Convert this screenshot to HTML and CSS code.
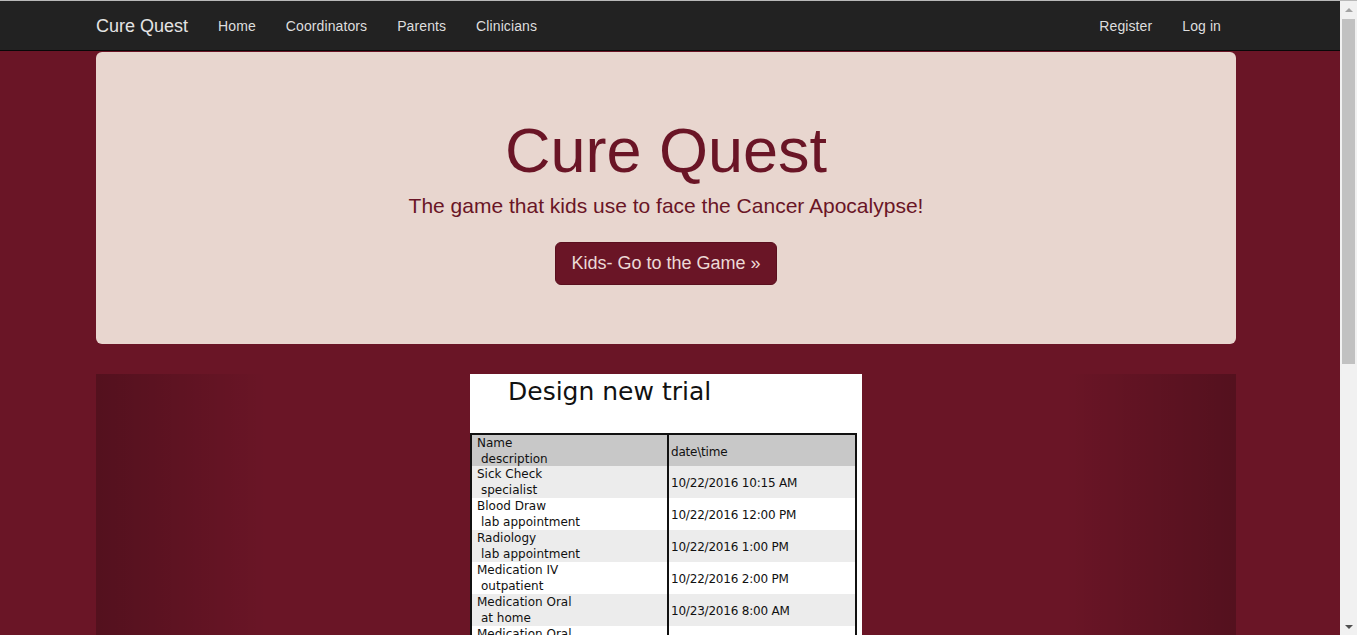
FILE: index.html
```html
<!DOCTYPE html>
<html lang="en">
<head>
<meta charset="utf-8">
<title>Cure Quest</title>
<link rel="stylesheet" href="styles.css">
</head>
<body>
<div class="viewport">
  <div class="page">
    <nav class="navbar">
      <div class="container nav-inner">
        <a class="brand" href="#">Cure Quest</a>
        <ul class="nav">
          <li><a href="#">Home</a></li>
          <li><a href="#">Coordinators</a></li>
          <li><a href="#">Parents</a></li>
          <li><a href="#">Clinicians</a></li>
        </ul>
        <ul class="nav nav-right">
          <li><a href="#">Register</a></li>
          <li><a href="#">Log in</a></li>
        </ul>
      </div>
    </nav>
    <main class="container">
      <section class="jumbotron">
        <h1>Cure Quest</h1>
        <p class="lead">The game that kids use to face the Cancer Apocalypse!</p>
        <a class="btn" href="#">Kids- Go to the Game &raquo;</a>
      </section>
      <section class="carousel">
        <div class="control control-left"></div>
        <div class="slide">
          <div class="mock-title">Design new trial</div>
          <div class="mock-table">
            <div class="row head">
              <div class="c1">Name<br><span class="sub">description</span></div>
              <div class="c2">date\time</div>
            </div>
            <div class="row alt">
              <div class="c1">Sick Check<br><span class="sub">specialist</span></div>
              <div class="c2">10/22/2016 10:15 AM</div>
            </div>
            <div class="row">
              <div class="c1">Blood Draw<br><span class="sub">lab appointment</span></div>
              <div class="c2">10/22/2016 12:00 PM</div>
            </div>
            <div class="row alt">
              <div class="c1">Radiology<br><span class="sub">lab appointment</span></div>
              <div class="c2">10/22/2016 1:00 PM</div>
            </div>
            <div class="row">
              <div class="c1">Medication IV<br><span class="sub">outpatient</span></div>
              <div class="c2">10/22/2016 2:00 PM</div>
            </div>
            <div class="row alt">
              <div class="c1">Medication Oral<br><span class="sub">at home</span></div>
              <div class="c2">10/23/2016 8:00 AM</div>
            </div>
            <div class="row">
              <div class="c1">Medication Oral<br><span class="sub">at home</span></div>
              <div class="c2">10/24/2016 8:00 AM</div>
            </div>
          </div>
        </div>
        <div class="control control-right"></div>
      </section>
    </main>
  </div>
  <div class="scrollbar">
    <div class="arrow up"></div>
    <div class="track"><div class="thumb"></div></div>
    <div class="arrow down"></div>
  </div>
</div>
</body>
</html>
```

FILE: styles.css
```css
html, body {
  margin: 0;
  padding: 0;
  height: 635px;
  overflow: hidden;
}
body {
  border-top: 1px solid #b9b9b9;
  box-sizing: border-box;
  font-family: "Liberation Sans", Arial, sans-serif;
  background: #6a1526;
}
.viewport {
  display: flex;
  height: 634px;
}
.page {
  flex: 1;
  min-width: 0;
  overflow: hidden;
}
.container {
  width: 1140px;
  margin-left: 96px;
}

/* navbar */
.navbar {
  background: #222;
  height: 50px;
  box-sizing: border-box;
  border-bottom: 1px solid #080808;
}
.nav-inner {
  display: flex;
  align-items: center;
  height: 49px;
}
.brand {
  font-size: 18px;
  line-height: 20px;
  color: #e4e4e4;
  text-decoration: none;
  padding-right: 15px;
}
.nav {
  display: flex;
  list-style: none;
  margin: 0;
  padding: 0;
}
.nav a {
  display: block;
  padding: 15px;
  font-size: 14px;
  line-height: 20px;
  letter-spacing: 0.1px;
  color: #dedede;
  text-decoration: none;
}
.nav-right {
  margin-left: auto;
}

/* jumbotron */
.jumbotron {
  margin-top: 1px;
  background: #e8d6cf;
  border-radius: 6px;
  padding: 64px 60px 59px;
  text-align: center;
  color: #6a1526;
  margin-bottom: 30px;
}
.jumbotron h1 {
  margin: 0 0 6px;
  font-size: 63px;
  font-weight: normal;
  line-height: 69px;
}
.lead {
  margin: 0 0 21px;
  font-size: 21px;
  line-height: 30px;
}
.btn {
  display: inline-block;
  box-sizing: border-box;
  height: 43px;
  padding: 0 15px;
  font-size: 18px;
  line-height: 41px;
  color: #ecd9d6;
  background: #6a1526;
  border: 1px solid #5a0f1e;
  border-radius: 6px;
  text-decoration: none;
}

/* carousel */
.carousel {
  display: flex;
  justify-content: space-between;
  height: 400px;
}
.control {
  width: 171px;
}
.control-left {
  background: linear-gradient(to right, rgba(0,0,0,0.21), rgba(0,0,0,0));
}
.control-right {
  background: linear-gradient(to left, rgba(0,0,0,0.21), rgba(0,0,0,0));
}
.slide {
  width: 392px;
  background: #fff;
  font-family: "DejaVu Sans", sans-serif;
  color: #111;
}
.mock-title {
  font-size: 25px;
  line-height: 34px;
  padding: 1px 0 0 38px;
  height: 58px;
}
.mock-table {
  width: 383px;
  border: 2px solid #111;
  border-bottom: none;
}
.row {
  display: flex;
  height: 32px;
  font-size: 12px;
}
.row.head { background: #c8c8c8; height: 31px; }
.row.alt { background: #ececec; }
.c1 {
  width: 190px;
  padding: 0 0 0 5px;
  line-height: 16px;
  border-right: 2px solid #111;
}
.c1 .sub { padding-left: 4px; }
.c2 {
  flex: 1;
  padding-left: 2px;
  display: flex;
  align-items: center;
  padding-top: 2px;
  letter-spacing: -0.2px;
}

/* scrollbar */
.scrollbar {
  width: 17px;
  background: #f1f1f1;
  display: flex;
  flex-direction: column;
}
.arrow {
  height: 17px;
  display: flex;
  align-items: center;
  justify-content: center;
}
.arrow.up::before {
  content: "";
  border-left: 4px solid transparent;
  border-right: 4px solid transparent;
  border-bottom: 4px solid #a3a3a3;
}
.arrow.down::before {
  content: "";
  border-left: 4px solid transparent;
  border-right: 4px solid transparent;
  border-top: 4px solid #505050;
}
.track {
  flex: 1;
  padding: 1px 2px 0;
}
.thumb {
  height: 345px;
  background: #c1c1c1;
}
```
